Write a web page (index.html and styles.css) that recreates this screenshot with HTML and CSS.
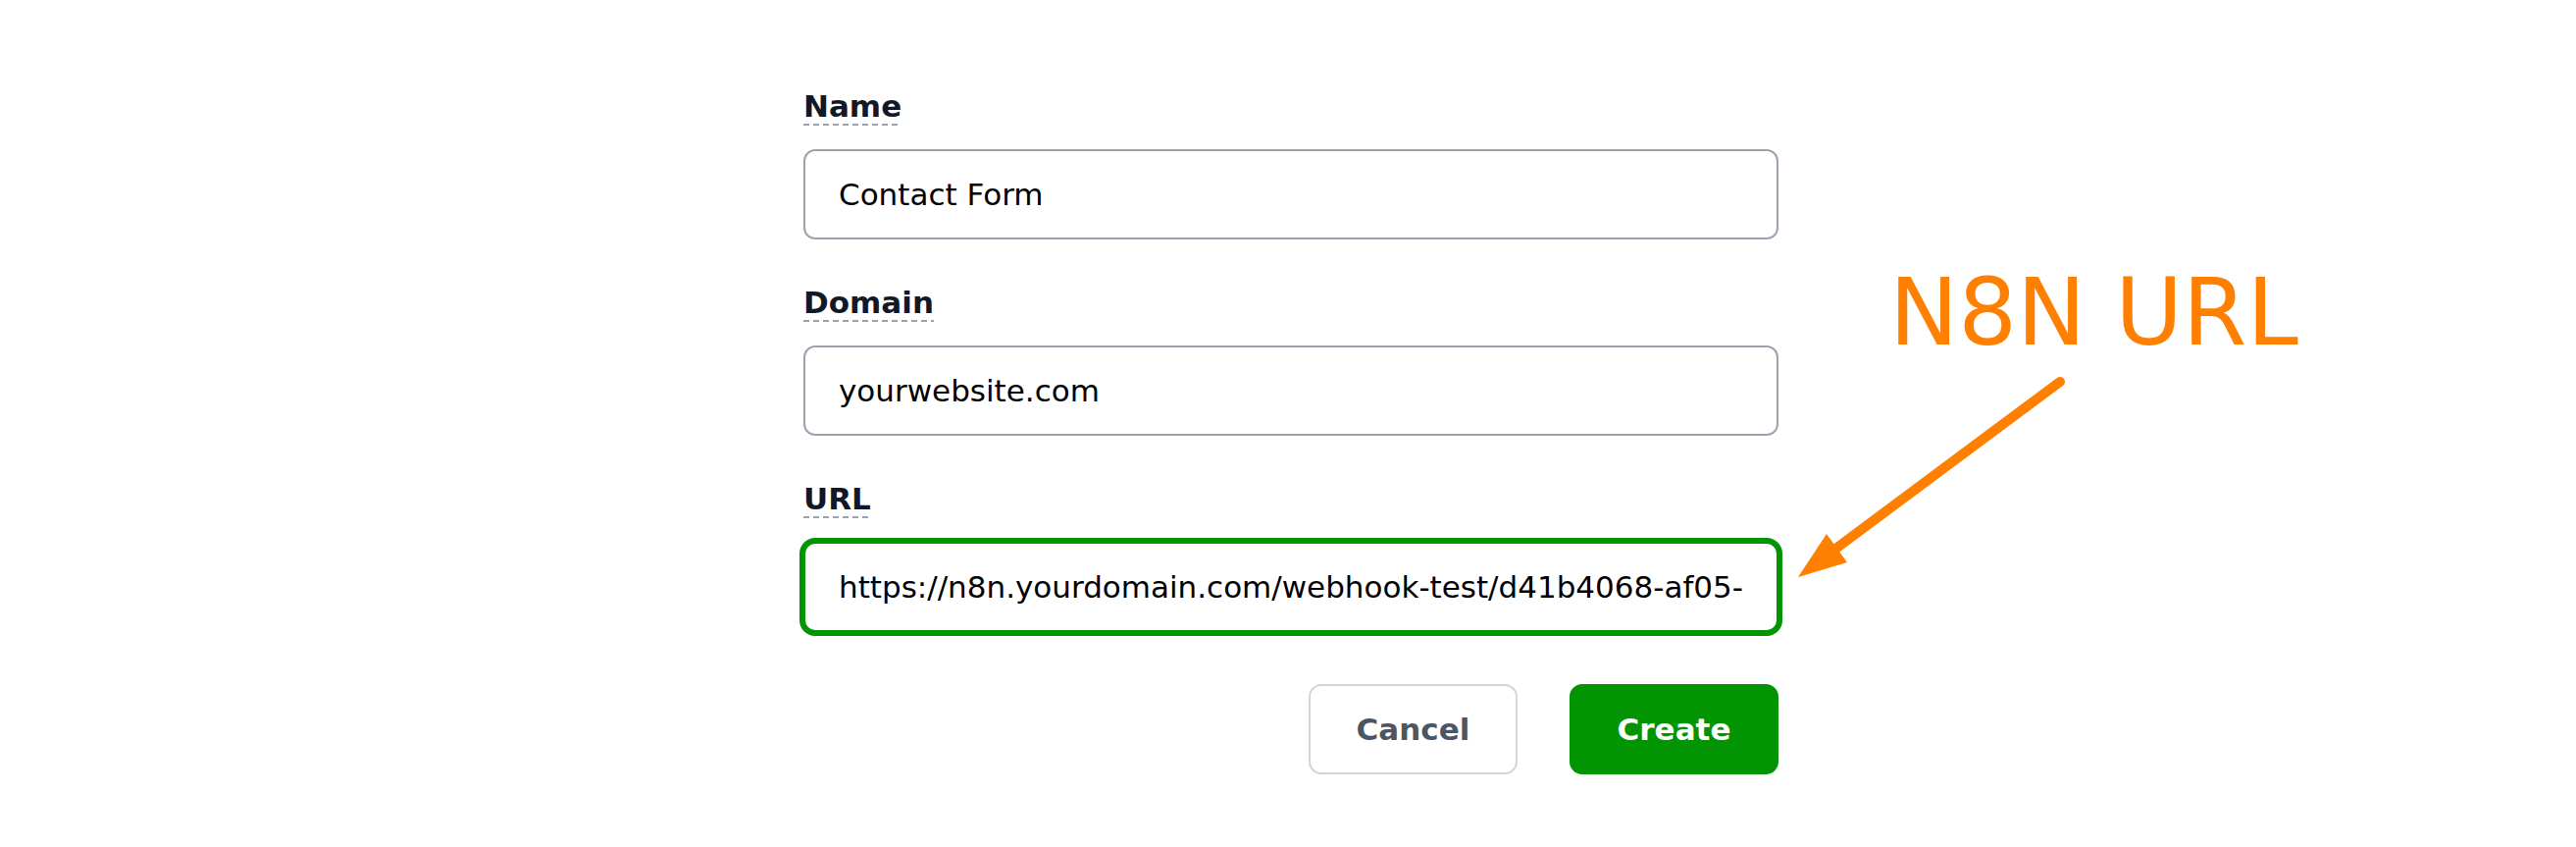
FILE: index.html
```html
<!DOCTYPE html>
<html lang="en">
<head>
<meta charset="utf-8">
<title>Create Form</title>
<link rel="stylesheet" href="styles.css">
</head>
<body>
<main class="page">
  <form class="form">
    <div class="field">
      <div class="label-row"><span class="label">Name</span></div>
      <input class="input" type="text" value="Contact Form">
    </div>
    <div class="field">
      <div class="label-row"><span class="label">Domain</span></div>
      <input class="input" type="text" value="yourwebsite.com">
    </div>
    <div class="field field-last">
      <div class="label-row"><span class="label">URL</span></div>
      <input class="input input-focus" type="text" value="https://n8n.yourdomain.com/webhook-test/d41b4068-af05-">
    </div>
    <div class="actions">
      <button type="button" class="btn btn-cancel">Cancel</button>
      <button type="button" class="btn btn-create">Create</button>
    </div>
  </form>
</main>
<div class="annotation-text">N8N URL</div>
<svg class="annotation-arrow" width="2626" height="863" viewBox="0 0 2626 863" aria-hidden="true">
  <line x1="2100" y1="389" x2="1870" y2="560" stroke="#ff7f00" stroke-width="10" stroke-linecap="round"/>
  <polygon points="1833,588 1862,544 1883,573" fill="#ff7f00"/>
</svg>
</body>
</html>
```
FILE: styles.css
```css
html, body {
  margin: 0;
  padding: 0;
  background: #ffffff;
}
body {
  font-family: "DejaVu Sans", "Noto Sans", sans-serif;
  position: relative;
  width: 2626px;
  height: 863px;
  overflow: hidden;
}
.page {
  padding: 90px 0 0 819px;
}
.form {
  width: 994px;
  display: flex;
  flex-direction: column;
}
.field {
  display: flex;
  flex-direction: column;
  margin-bottom: 46px;
}
.field-last {
  margin-bottom: 53px;
}
.label-row {
  display: flex;
  align-items: flex-start;
  margin-bottom: 24px;
}
.label {
  display: block;
  font-size: 31px;
  font-weight: 700;
  color: #111827;
  line-height: 36px;
  padding-bottom: 2px;
  background: repeating-linear-gradient(90deg, #9ca3af 0 6px, transparent 6px 10px) left bottom / 100% 2px no-repeat;
}
.input {
  box-sizing: border-box;
  width: 100%;
  height: 92px;
  margin: 0;
  padding: 0 34px;
  border: 2px solid #9ca3af;
  border-radius: 12px;
  font-family: inherit;
  font-size: 31px;
  color: #000000;
  background: #ffffff;
  outline: none;
}
.input-focus {
  border-color: #029402;
  box-shadow: 0 0 0 4px #029402;
}
.actions {
  display: flex;
  justify-content: flex-end;
  gap: 53px;
}
.btn {
  box-sizing: border-box;
  width: 213px;
  height: 92px;
  border-radius: 13px;
  border: 2px solid #d1d5db;
  font-family: inherit;
  font-size: 31px;
  font-weight: 700;
  padding: 0;
  cursor: pointer;
}
.btn-cancel {
  background: #ffffff;
  color: #4b5563;
}
.btn-create {
  background: #029402;
  border-color: #029402;
  color: #ffffff;
}
.annotation-text {
  position: absolute;
  left: 1926px;
  top: 272px;
  font-size: 94px;
  line-height: 94px;
  color: #ff7f00;
  white-space: nowrap;
}
.annotation-arrow {
  position: absolute;
  left: 0;
  top: 0;
  pointer-events: none;
}
```
